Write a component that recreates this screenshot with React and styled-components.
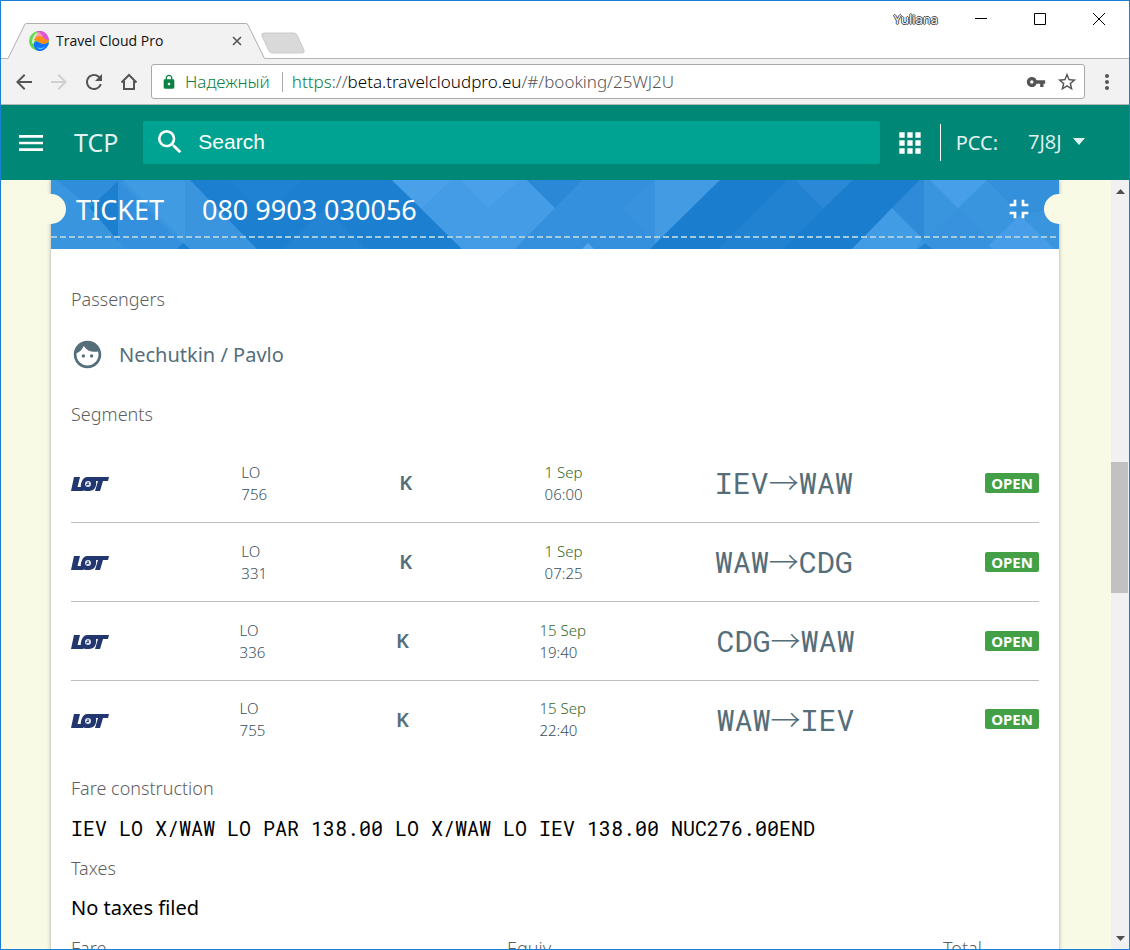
import React from 'react';
import styled, { createGlobalStyle } from 'styled-components';
import {
  MdMenu, MdSearch, MdApps, MdFullscreenExit, MdFace, MdArrowBack, MdArrowForward,
  MdRefresh, MdVpnKey, MdStarBorder, MdLock, MdMoreVert,
} from 'react-icons/md';

const sans = '"Noto Sans", "Open Sans", sans-serif';
const ui = '"Open Sans", "Noto Sans", sans-serif';
const mono = '"Roboto Mono", "DejaVu Sans Mono", monospace';

const GlobalStyle = createGlobalStyle`
  *, *::before, *::after { box-sizing: border-box; }
  body { margin: 0; font-family: ${sans}; background: #fff; }
  button { padding: 0; border: 0; background: none; font: inherit; color: inherit; cursor: pointer; }
  svg { display: block; flex: none; }
`;

const Window = styled.div`
  height: 100vh;
  display: flex;
  flex-direction: column;
  border: 1px solid #1a7fd4;
  overflow: hidden;
`;

/* Browser frame */
const TabStrip = styled.div`
  display: flex;
  align-items: flex-end;
  height: 58px;
  flex: none;
  padding: 0 1px 0 7px;
  border-bottom: 1px solid #b6b6b6;
`;

const Tab = styled.div`
  position: relative;
  display: flex;
  align-items: center;
  width: 257px;
  height: 36px;
  margin-bottom: -1px;
  padding: 0 22px 0 21px;
  font: 14px/20px ${ui};
  color: #111;
`;

const TabShape = styled.svg`
  position: absolute;
  inset: 0;
`;

const TabTitle = styled.span`
  position: relative;
  flex: 1;
  margin-left: 7px;
  white-space: nowrap;
`;

const TabIcon = styled.span`
  position: relative;
`;

const TabClose = styled.button`
  position: relative;
  width: 12px;
  height: 12px;
`;

const NewTab = styled.button`
  margin: 0 0 4px -4px;
`;

const WindowControls = styled.div`
  align-self: flex-start;
  display: flex;
  align-items: center;
  height: 36px;
  margin-left: auto;
`;

const Profile = styled.button`
  margin-right: 13px;
  font: 13px/18px ${ui};
  color: #fff;
  text-shadow: 1px 0 #444, -1px 0 #444, 0 1px #444, 0 -1px #444;
`;

const WindowButton = styled.button`
  width: 59px;
  height: 36px;
  display: grid;
  place-items: center;
`;

const Toolbar = styled.div`
  display: flex;
  align-items: center;
  flex: none;
  height: 46px;
  padding: 0 10px 0 11px;
  background: #f2f2f2;
  border-bottom: 1px solid #b6b6b6;
  color: #555;
`;

const NavGroup = styled.nav`
  display: flex;
  gap: 11px;
`;

const NavButton = styled.button`
  color: ${(p) => (p.$dim ? '#d0d0d0' : '#555')};
`;

const AddressBar = styled.div`
  flex: 1;
  display: flex;
  align-items: center;
  height: 35px;
  margin: 0 10px;
  padding: 0 6px 0 9px;
  background: #fff;
  border: 1px solid #a9a9a9;
  border-radius: 3px;
  font: 17px/24px ${sans};
  font-weight: 300;
  white-space: nowrap;
`;

const Secure = styled.span`
  margin-left: 8px;
  padding-right: 12px;
  color: #0b8043;
`;

const Url = styled.a`
  flex: 1;
  padding-left: 9px;
  border-left: 1px solid #a9a9a9;
  line-height: 20px;
  color: #555;
  text-decoration: none;
`;

const Scheme = styled.span`color: #0b8043;`;
const Host = styled.span`color: #000;`;

const BarIcon = styled.button`
  margin-left: 10px;
`;

/* Application */
const AppBar = styled.header`
  display: flex;
  align-items: center;
  flex: none;
  height: 75px;
  padding: 0 43px 0 14px;
  background: #008775;
  color: #e0f2f1;
`;

const IconButton = styled.button`
  color: ${(p) => (p.$dark ? '#555' : '#fff')};
`;

const Brand = styled.a`
  margin: 0 25px 0 27px;
  padding-bottom: 2px;
  font-size: 25px;
  line-height: 32px;
  color: inherit;
  text-decoration: none;
`;

const SearchBox = styled.label`
  flex: 1;
  display: flex;
  align-items: center;
  height: 43px;
  margin-right: 14px;
  padding: 0 0 2px 11px;
  background: #00a291;
  border-radius: 2px;
  color: #fff;
`;

const SearchInput = styled.input`
  flex: 1;
  min-width: 0;
  margin-left: 12px;
  padding: 0;
  border: 0;
  outline: 0;
  background: none;
  font: 21px/28px "Liberation Sans", Arial, sans-serif;
  color: #fff;
  &::placeholder { color: #fff; opacity: 1; }
`;

const PccGroup = styled.div`
  display: flex;
  align-items: center;
  height: 37px;
  margin-left: 14px;
  padding-left: 15px;
  border-left: 1px solid #fff;
  font-size: 20px;
`;

const PccSelectWrap = styled.span`
  display: flex;
  align-items: center;
  margin-left: 30px;
  padding-bottom: 2px;
`;

const PccSelect = styled.select`
  width: 44px;
  padding: 0;
  border: 0;
  appearance: none;
  background: none;
  font: 20px/28px ${ui};
  color: inherit;
`;

const Viewport = styled.div`
  flex: 1;
  min-height: 0;
  display: flex;
`;

const Page = styled.main`
  flex: 1;
  min-width: 0;
  overflow: hidden;
  padding: 0 52px 0 50px;
  background: #f9fae6;
`;

const Card = styled.article`
  min-height: 100%;
  background: #fff;
  box-shadow: 0 0 4px rgba(0, 0, 0, 0.35);
`;

const TicketHeader = styled.header`
  position: relative;
  display: flex;
  align-items: center;
  height: 69px;
  padding: 0 24px 10px 25px;
  background: #3a95df;
  color: #fff;
  &::after {
    content: '';
    position: absolute;
    left: 0;
    right: 0;
    top: 56px;
    height: 2px;
    background: repeating-linear-gradient(90deg, #a3cbe0 0 6px, transparent 6px 9px);
  }
`;

const Pattern = styled.svg`
  position: absolute;
  inset: 0;
  width: 100%;
  height: 100%;
`;

const Notch = styled.span`
  position: absolute;
  top: 14px;
  ${(p) => p.$side}: -15px;
  width: 30px;
  height: 30px;
  border-radius: 50%;
  background: #f9fae6;
`;

const TicketTitle = styled.h1`
  position: relative;
  flex: 1;
  display: flex;
  gap: 38px;
  margin: 0;
  font-size: 27px;
  line-height: 36px;
  font-weight: 400;
`;

const CollapseButton = styled(IconButton)`
  position: relative;
  padding-bottom: 2px;
`;

const Body = styled.div`
  padding: 38px 20px 0;
`;

const Label = styled.h2`
  margin: 0;
  font-size: 18px;
  line-height: 24px;
  font-weight: 300;
  color: #5f5f5f;
`;

const Passenger = styled.div`
  display: flex;
  align-items: center;
  gap: 15px;
  height: 34px;
  margin: 26px 0 31px;
  font-size: 20px;
  color: #546e7a;
`;

const Segments = styled.table`
  display: block;
  margin: 18px 0;
  color: #546e7a;
`;

const SegmentBody = styled.tbody`
  display: block;
`;

const SegmentRow = styled.tr`
  display: flex;
  align-items: center;
  justify-content: space-between;
  height: 79px;
  border-bottom: 1px solid #bdbdbd;
  &:last-child { height: 77px; border-bottom: 0; }
`;

const Cell = styled.td`
  padding: 0 0 1px;
  font-size: 15px;
  line-height: 22px;
`;

const LogoCell = styled(Cell)`
  padding: 2px 0 0;
`;

const Line = styled.div`
  font-weight: 300;
  color: ${(p) => (p.$green ? '#33691e' : '#37505c')};
`;

const ClassCell = styled(Cell)`
  padding: 0;
  font-size: 20px;
  font-weight: 600;
`;

const RouteCell = styled(Cell)`
  padding: 0;
  font: 30px/36px ${mono};
  white-space: nowrap;
`;

const Arrow = styled.span`
  font-family: "Noto Sans CJK JP", sans-serif;
  font-weight: 300;
  line-height: 1;
`;

const Status = styled.span`
  display: block;
  padding: 0 6px;
  border-radius: 2px;
  background: #43a047;
  color: #fff;
  font-size: 15px;
  line-height: 20px;
  font-weight: 700;
`;

const FareLine = styled.p`
  margin: 16px 0;
  font: 20px/24px ${mono};
  color: #000;
`;

const TaxNote = styled.p`
  margin: 16px 0;
  font-size: 20px;
  line-height: 24px;
  color: #000;
`;

const Totals = styled.div`
  display: grid;
  grid-template-columns: 1fr 1fr 96px;
`;

const Scrollbar = styled.div`
  flex: none;
  width: 18px;
  display: flex;
  flex-direction: column;
  background: #f1f1f1;
`;

const ScrollArrow = styled.button`
  height: 22px;
  display: grid;
  place-items: center;
`;

const Track = styled.div`
  flex: 1;
  display: flex;
  flex-direction: column;
  &::before { content: ''; flex: 260; }
  &::after { content: ''; flex: 334; }
`;

const Thumb = styled.div`
  flex: 131;
  margin-right: 1px;
  background: #c1c1c1;
`;

const tiles = [
  ['#2f8dd9', '6,0 72,0 39,28'],
  ['#1c7fcf', '68,0 39,28 67,61'],
  ['#3490dd', '67,0 136,69 75,69 67,61'],
  ['#419be3', '72,0 134,0 134,62'],
  ['#3a94de', '134,0 139,0 206,69 139,69 134,62'],
  ['#1c7fcf', '139,0 341,0 411,69 206,69'],
  ['#2082d2', '178,0 250,0 215,35'],
  ['#2384d3', '274,28 315,69 233,69'],
  ['#1c7fcf', '132,63 126,69 139,69'],
  ['#459ce6', '341,0 475,0 504,28 464,69 411,69'],
  ['#4aa1ea', '410,0 475,0 469,0 437,28'],
  ['#4aa0e9', '341,0 400,0 371,28'],
  ['#2a88d7', '476,0 504,28 532,0'],
  ['#3490dc', '532,0 669,0 599,69 464,69'],
  ['#3892dd', '571,28 604,0 604,62'],
  ['#429be3', '604,0 669,0 604,64'],
  ['#1b7dce', '669,0 869,0 801,69 599,69'],
  ['#2282d2', '736,0 802,0 732,69 667,69'],
  ['#2a88d7', '744,0 802,0 772,28'],
  ['#429be5', '841,28 871,58 865,69 801,69'],
  ['#2f8bd8', '869,0 873,0 873,60 841,28'],
  ['#479ee9', '879,0 936,0 907,28'],
  ['#3590dc', '936,0 1008,0 1008,28 969,35'],
  ['#3892dd', '907,28 941,62 934,69 881,69 873,60'],
  ['#479de8', '969,35 1003,69 941,69 938,65'],
  ['#2582d0', '874,63 867,69 881,69'],
  ['#55a8ea', '537,63 531,69 543,69'],
];

const segments = [
  { flight: '756', date: '1 Sep', time: '06:00', from: 'IEV', to: 'WAW' },
  { flight: '331', date: '1 Sep', time: '07:25', from: 'WAW', to: 'CDG' },
  { flight: '336', date: '15 Sep', time: '19:40', from: 'CDG', to: 'WAW' },
  { flight: '755', date: '15 Sep', time: '22:40', from: 'WAW', to: 'IEV' },
];

const Favicon = () => (
  <svg width="20" height="20" viewBox="0 0 20 20" aria-hidden="true">
    <circle cx="10" cy="10" r="10" fill="#63d84f" />
    <path d="M8 0a10 10 0 0 1 12 10L13 8 8 4Z" fill="#e052d8" />
    <path d="M5 5 10 1l4 4-4 3-5 2Z" fill="#ff9fb0" />
    <path d="M3 12C3 7 5 3 9 1L6 6l-1 7Z" fill="#d3f5c4" />
    <path d="M5 9C7 5 11 4 14 6c1 2 3 3 6 3-1 4-6 5-9 3-2-2-4-3-6-3Z" fill="#ff8a14" />
    <path d="M5 12c2-3 4-1 6 0 3 2 6 1 9-1a10 10 0 0 1-8 9c-5 1-8-4-7-8Z" fill="#1473ff" />
    <path d="M8 16c3 2 6 1 8-1-1 3-6 5-8 1Z" fill="#55c8ff" />
  </svg>
);

const LotLogo = () => (
  <svg width="38" height="16" viewBox="0 0 38 16" role="img" aria-label="LOT">
    <g fill="#22366f">
      <path d="M3 1h6L6.500 11H13l-1 4H0Z" />
      <path d="M17 1h21l-1 4h-5l-3 10h-5l3-10h-2c1 6-2 10-7 10h-3c-4 0-6-3-5-7s3-7 6-7Z" />
    </g>
    <circle cx="17" cy="8" r="3" fill="#dfe3ee" />
    <path d="M15 9l3-1M17 6v3" stroke="#22366f" />
  </svg>
);

export default function App() {
  return (
    <Window>
      <GlobalStyle />
      <TabStrip>
        <Tab>
          <TabShape width="257" height="36" viewBox="0 0 257 36" aria-hidden="true">
            <path d="M0 35.500 16.500 2q.5-1.500 2-1.500H238q1.500 0 2 1.500L256.500 35.500V36H0Z" fill="#f2f2f2" />
            <path d="M0 35.500 16.500 2q.5-1.500 2-1.500H238q1.500 0 2 1.500L256.500 35.500" fill="none" stroke="#b0b0b0" />
          </TabShape>
          <TabIcon><Favicon /></TabIcon>
          <TabTitle>Travel Cloud Pro</TabTitle>
          <TabClose aria-label="Close tab">
            <svg width="12" height="12" viewBox="0 0 12 12"><path d="m2 2 8 8M10 2l-8 8" stroke="#555" strokeWidth="1.600" /></svg>
          </TabClose>
        </Tab>
        <NewTab aria-label="New tab">
          <svg width="44" height="22" viewBox="0 0 44 22"><path d="M3 1h30q2 0 3 2l7 15q1 3-2 3H11q-2 0-3-2L1 4q-1-3 2-3Z" fill="#d9d9d9" stroke="#cbcbcb" /></svg>
        </NewTab>
        <WindowControls>
          <Profile>Yuliana</Profile>
          <WindowButton aria-label="Minimize">
            <svg width="12" height="12" viewBox="0 0 12 12"><path d="M0 5.500h12" stroke="#000" /></svg>
          </WindowButton>
          <WindowButton aria-label="Maximize">
            <svg width="12" height="12" viewBox="0 0 12 12"><path d="M.5.5h11v11H.5Z" fill="none" stroke="#000" /></svg>
          </WindowButton>
          <WindowButton aria-label="Close">
            <svg width="12" height="12" viewBox="0 0 12 12"><path d="m0 0 12 12M12 0 0 12" stroke="#000" /></svg>
          </WindowButton>
        </WindowControls>
      </TabStrip>

      <Toolbar>
        <NavGroup aria-label="Browser navigation">
          <NavButton aria-label="Back"><MdArrowBack size={24} /></NavButton>
          <NavButton aria-label="Forward" $dim><MdArrowForward size={24} /></NavButton>
          <NavButton aria-label="Reload"><MdRefresh size={24} /></NavButton>
          <NavButton aria-label="Home">
            <svg width="24" height="24" viewBox="0 0 24 24" fill="none" stroke="currentColor" strokeWidth="2"><path d="M4.500 12.500 12 5l7.500 7.500M7 11v8h10v-8" /></svg>
          </NavButton>
        </NavGroup>
        <AddressBar>
          <MdLock size={16} color="#0b8043" />
          <Secure>Надежный</Secure>
          <Url href="#/booking/25WJ2U"><Scheme>https</Scheme>://<Host>beta.travelcloudpro.eu</Host>/#/booking/25WJ2U</Url>
          <BarIcon aria-label="Saved password"><MdVpnKey size={20} /></BarIcon>
          <BarIcon aria-label="Bookmark"><MdStarBorder size={22} /></BarIcon>
        </AddressBar>
        <IconButton $dark aria-label="Browser menu"><MdMoreVert size={24} /></IconButton>
      </Toolbar>

      <AppBar>
        <IconButton aria-label="Menu"><MdMenu size={32} /></IconButton>
        <Brand href="#/">TCP</Brand>
        <SearchBox>
          <MdSearch size={32} aria-hidden="true" />
          <SearchInput type="text" placeholder="Search" aria-label="Search" />
        </SearchBox>
        <IconButton aria-label="Apps"><MdApps size={32} /></IconButton>
        <PccGroup>
          <label htmlFor="pcc">PCC:</label>
          <PccSelectWrap>
            <PccSelect id="pcc" defaultValue="7J8J"><option>7J8J</option></PccSelect>
            <svg width="14" height="7" viewBox="0 0 14 7" aria-hidden="true"><path d="M1 0h12L7 7Z" fill="currentColor" /></svg>
          </PccSelectWrap>
        </PccGroup>
      </AppBar>

      <Viewport>
        <Page>
          <Card>
            <TicketHeader>
              <Pattern viewBox="0 0 1008 69" preserveAspectRatio="none" aria-hidden="true">
                {tiles.map(([fill, points]) => <polygon key={points} fill={fill} points={points} />)}
              </Pattern>
              <Notch $side="left" />
              <Notch $side="right" />
              <TicketTitle><span>TICKET</span><span>080 9903 030056</span></TicketTitle>
              <CollapseButton aria-label="Collapse ticket"><MdFullscreenExit size={32} /></CollapseButton>
            </TicketHeader>
            <Body>
              <Label>Passengers</Label>
              <Passenger><MdFace size={33} />Nechutkin / Pavlo</Passenger>
              <Label>Segments</Label>
              <Segments aria-label="Segments">
                <SegmentBody>
                  {segments.map((s) => (
                    <SegmentRow key={s.flight}>
                      <LogoCell><LotLogo /></LogoCell>
                      <Cell><Line>LO</Line><Line>{s.flight}</Line></Cell>
                      <ClassCell>K</ClassCell>
                      <Cell><Line $green>{s.date}</Line><Line>{s.time}</Line></Cell>
                      <RouteCell>{s.from}<Arrow>→</Arrow>{s.to}</RouteCell>
                      <Cell><Status>OPEN</Status></Cell>
                    </SegmentRow>
                  ))}
                </SegmentBody>
              </Segments>
              <Label>Fare construction</Label>
              <FareLine>IEV LO X/WAW LO PAR 138.00 LO X/WAW LO IEV 138.00 NUC276.00END</FareLine>
              <Label>Taxes</Label>
              <TaxNote>No taxes filed</TaxNote>
              <Totals>
                <Label>Fare</Label>
                <Label>Equiv</Label>
                <Label>Total</Label>
              </Totals>
            </Body>
          </Card>
        </Page>
        <Scrollbar>
          <ScrollArrow aria-label="Scroll up"><svg width="9" height="5" viewBox="0 0 9 5"><path d="M0 5 4.500 0 9 5Z" fill="#505050" /></svg></ScrollArrow>
          <Track><Thumb /></Track>
          <ScrollArrow aria-label="Scroll down"><svg width="9" height="5" viewBox="0 0 9 5"><path d="M0 0h9L4.500 5Z" fill="#505050" /></svg></ScrollArrow>
        </Scrollbar>
      </Viewport>
    </Window>
  );
}
